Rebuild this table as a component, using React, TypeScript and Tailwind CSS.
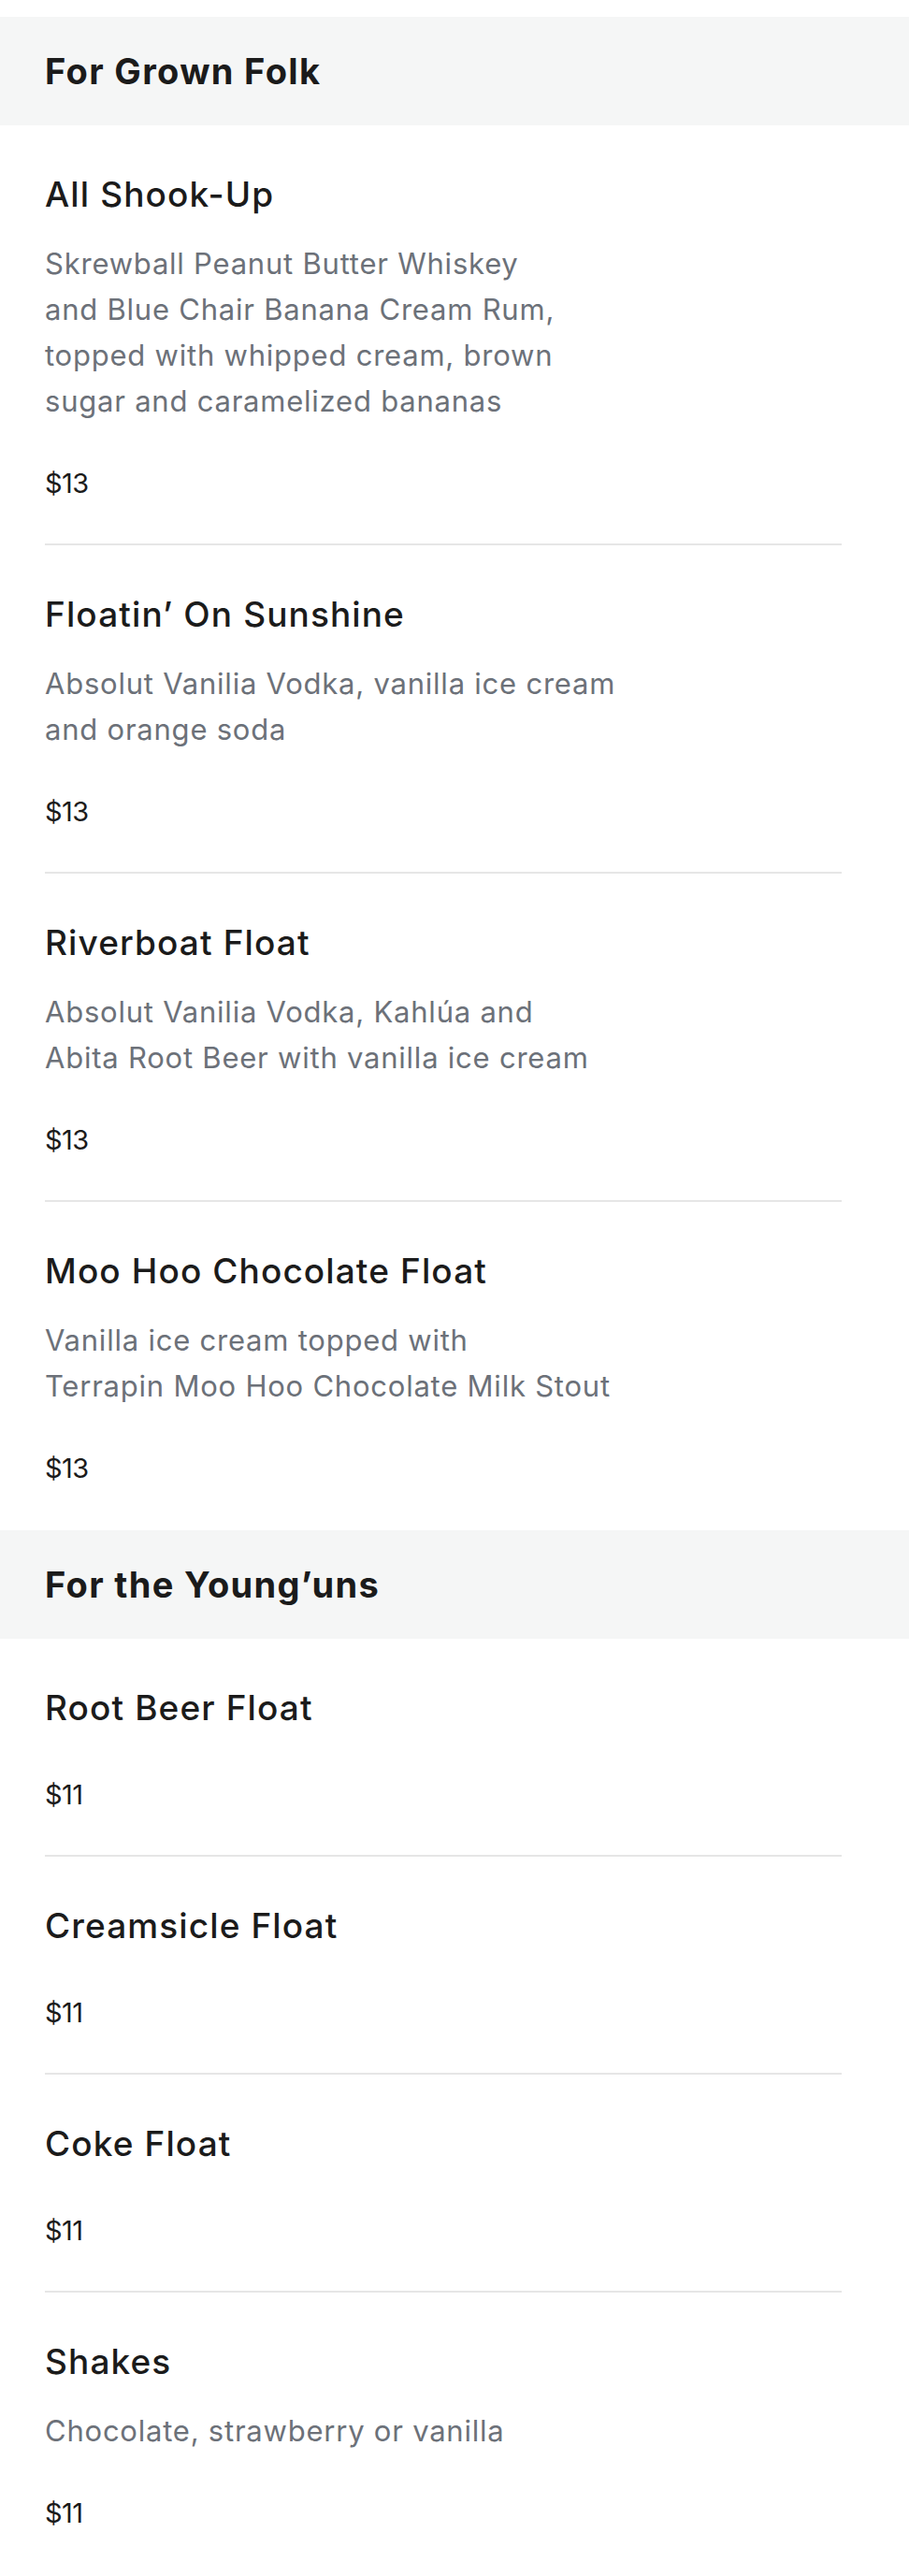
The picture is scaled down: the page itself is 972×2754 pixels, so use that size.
type Item = { name: string; desc?: string[]; price: string };
type Section = { title: string; items: Item[] };

const menu: Section[] = [
  {
    title: "For Grown Folk",
    items: [
      {
        name: "All Shook-Up",
        desc: [
          "Skrewball Peanut Butter Whiskey",
          "and Blue Chair Banana Cream Rum,",
          "topped with whipped cream, brown",
          "sugar and caramelized bananas",
        ],
        price: "$13",
      },
      {
        name: "Floatin\u2019 On Sunshine",
        desc: ["Absolut Vanilia Vodka, vanilla ice cream", "and orange soda"],
        price: "$13",
      },
      {
        name: "Riverboat Float",
        desc: ["Absolut Vanilia Vodka, Kahl\u00faa and", "Abita Root Beer with vanilla ice cream"],
        price: "$13",
      },
      {
        name: "Moo Hoo Chocolate Float",
        desc: ["Vanilla ice cream topped with", "Terrapin Moo Hoo Chocolate Milk Stout"],
        price: "$13",
      },
    ],
  },
  {
    title: "For the Young\u2019uns",
    items: [
      { name: "Root Beer Float", price: "$11" },
      { name: "Creamsicle Float", price: "$11" },
      { name: "Coke Float", price: "$11" },
      { name: "Shakes", desc: ["Chocolate, strawberry or vanilla"], price: "$11" },
    ],
  },
];

function MenuItem({ item, last }: { item: Item; last: boolean }) {
  return (
    <div className={last ? "pt-[50px] pb-[46px]" : "pt-[50px] pb-[44px] border-b-2 border-[#e6e6e6]"}>
      <h3 className="text-[37px] leading-[48px] font-medium tracking-[0.03em] text-[#1b1b1b]">{item.name}</h3>
      {item.desc && (
        <p className="mt-[25px] text-[31px] leading-[49px] tracking-[0.025em] text-[#6c7179]">
          {item.desc.map((l) => (
            <span key={l} className="block">
              {l}
            </span>
          ))}
        </p>
      )}
      <p className={(item.desc ? "mt-[44px]" : "mt-[49px]") + " text-[29px] leading-[40px] tracking-[-0.02em] text-[#1b1b1b]"}>
        {item.price}
      </p>
    </div>
  );
}

export default function App() {
  return (
    <div className="w-[972px] bg-white pt-[18px] font-['Inter',sans-serif]">
      {menu.map((s) => (
        <section key={s.title}>
          <div className="h-[116px] bg-[#f5f6f6] px-[48px] flex items-center">
            <h2 className="text-[38px] font-bold tracking-[0.035em] text-[#1b1b1b]">{s.title}</h2>
          </div>
          <div className="mx-[48px] w-[852px]">
            {s.items.map((it, i) => (
              <MenuItem key={it.name} item={it} last={i === s.items.length - 1} />
            ))}
          </div>
        </section>
      ))}
    </div>
  );
}
